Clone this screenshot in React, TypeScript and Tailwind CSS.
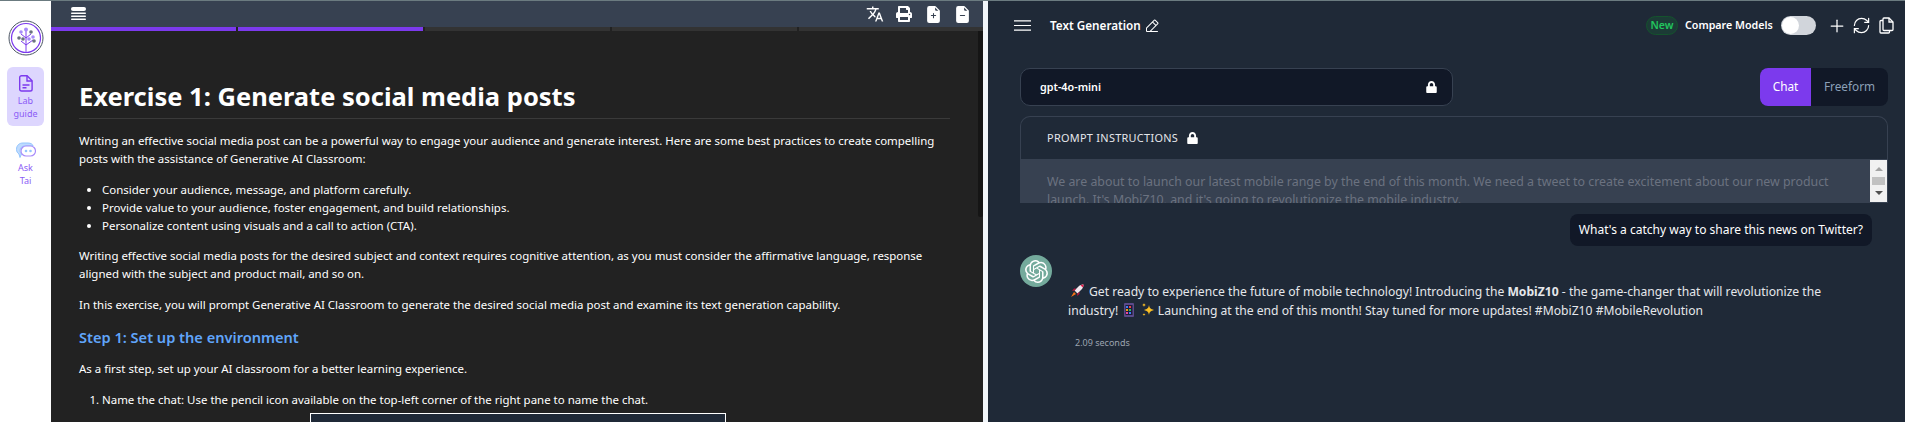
import { Plus, RefreshCw } from "lucide-react";
import { BsFileEarmarkMinusFill, BsFileEarmarkPlusFill } from "react-icons/bs";
import { FaLock, FaPrint } from "react-icons/fa";
import { MdTranslate } from "react-icons/md";
import { PiPencilSimpleLine } from "react-icons/pi";
import { SiOpenai } from "react-icons/si";

const bullets = [
  "Consider your audience, message, and platform carefully.",
  "Provide value to your audience, foster engagement, and build relationships.",
  "Personalize content using visuals and a call to action (CTA).",
];

const progress = [true, true, false, false];

const Logo = () => (
  <svg width="36" height="36" viewBox="0 0 36 36" fill="none">
    <circle cx="18" cy="18" r="17" stroke="#4b5563" strokeWidth="1" />
    <circle cx="18" cy="18" r="14.5" stroke="#7c3aed" strokeWidth="1.2" />
    <path d="M18 32V10M18 25l-5-4M18 25l7-5M18 18l-5-4M18 18l5-4" stroke="#7c3aed" strokeWidth="1" />
    <circle cx="18" cy="9.5" r="2" fill="#a78bfa" />
    <circle cx="13" cy="12" r="1.8" fill="#a78bfa" />
    <circle cx="23" cy="12" r="1.8" fill="#6b7280" />
    <circle cx="11" cy="18" r="1.8" fill="#6b7280" />
    <circle cx="25" cy="17" r="1.8" fill="#a78bfa" />
    <circle cx="15" cy="19" r="1.8" fill="#6b7280" />
    <circle cx="21" cy="19" r="1.8" fill="#a78bfa" />
    <circle cx="26" cy="21" r="1.8" fill="#6b7280" />
  </svg>
);

const LabIcon = () => (
  <svg width="14" height="17" viewBox="0 0 14 17" fill="none" stroke="#7c3aed" strokeWidth="1.4">
    <path d="M2.5.8h5.6l5 5v8.4a1.8 1.8 0 0 1-1.8 1.8H2.5A1.8 1.8 0 0 1 .7 14.200V2.600A1.800 1.800 0 0 1 2.500.800Z" />
    <path d="M8 1v5h5" />
    <path d="M3.500 10h7M3.500 12.800h4" />
  </svg>
);

const AskIcon = () => (
  <svg width="20" height="17" viewBox="0 0 20 17" fill="none">
    <path d="M7 1h5c3 0 5 1.500 5 3H8.500C6 4 4 6 4 8.500c0 1.500.5 2.500 1.500 3.500L4 15.500 3 12c-1.500-1-2.500-2.500-2.500-4.500C.5 3.500 3 1 7 1Z" fill="#bfdbfe" stroke="#93c5fd" />
    <rect x="5" y="4" width="14.500" height="10" rx="5" fill="#fff" stroke="#a78bfa" strokeWidth="1.200" />
    <circle cx="10" cy="9" r="1.300" fill="#93c5fd" />
    <circle cx="14.500" cy="9" r="1.300" fill="#93c5fd" />
  </svg>
);

const StackIcon = () => (
  <svg width="15" height="14" viewBox="0 0 15 14" fill="#fff">
    <rect x="0" y="0" width="15" height="4" rx="2" />
    <rect x="0" y="5.500" width="15" height="1.500" rx=".7" />
    <rect x="0" y="8.500" width="15" height="1.500" rx=".7" />
    <rect x="0" y="11.500" width="15" height="1.500" rx=".7" />
  </svg>
);

const BurgerIcon = () => (
  <svg width="17" height="11" viewBox="0 0 17 11" stroke="#fff" strokeWidth="1.200">
    <path d="M0 .8h17M0 5.500h17M0 10.200h17" />
  </svg>
);

const CopyIcon = () => (
  <svg width="15" height="17" viewBox="0 0 15 17" fill="none" stroke="#fff" strokeWidth="1.300">
    <path d="M5 1h5l4 4v7.500a1 1 0 0 1-1 1H5a1 1 0 0 1-1-1V2a1 1 0 0 1 1-1Z" />
    <path d="M10 1v4h4" />
    <path d="M4 3.500H2a1 1 0 0 0-1 1V15a1 1 0 0 0 1 1h7.500a1 1 0 0 0 1-1v-1.500" />
  </svg>
);

const RocketIcon = () => (
  <svg width="14" height="14" viewBox="0 0 14 14" className="inline-block align-[-2px]">
    <path d="M4.500 6.500 9 2c1.500-1.200 3.500-1.700 4.500-1.500.2 1-.3 3-1.500 4.500L7.500 9.500Z" fill="#f3e8ee" />
    <path d="M10.500 1.200c1-.6 2.300-.8 3-.7.1.7-.1 2-.7 3Z" fill="#e11d48" />
    <path d="M4.500 6.500 2 7l2-2.500h2ZM7.500 9.500 7 12l2.500-2V8Z" fill="#be123c" />
    <path d="M4 8 1 13l5-3Z" fill="#f97316" />
  </svg>
);

const AbacusIcon = () => (
  <svg width="10" height="14" viewBox="0 0 10 14" className="inline-block align-[-2px]">
    <rect x="0" y="0" width="10" height="14" rx="1" fill="#5b4b8a" />
    <rect x="1.500" y="2" width="7" height="10" fill="#1e1b3a" />
    <rect x="2" y="3" width="2" height="2" fill="#3b82f6" />
    <rect x="5" y="3" width="2" height="2" fill="#ef4444" />
    <rect x="2" y="6" width="2" height="2" fill="#f59e0b" />
    <rect x="5" y="6" width="2" height="2" fill="#22c55e" />
    <rect x="2" y="9" width="2" height="2" fill="#ec4899" />
    <rect x="5" y="9" width="2" height="2" fill="#3b82f6" />
  </svg>
);

const SparkleIcon = () => (
  <svg width="14" height="14" viewBox="0 0 14 14" fill="#fbbf24" className="inline-block align-[-2px]">
    <path d="M8 2c.5 3 1.500 4 5 5-3.500 1-4.500 2-5 5-.5-3-1.500-4-5-5 3.500-1 4.500-2 5-5Z" />
    <path d="M3 0c.2 1.200.8 1.800 2 2-1.200.2-1.800.8-2 2-.2-1.200-.8-1.800-2-2 1.200-.2 1.800-.8 2-2ZM3 10c.2 1 .6 1.400 1.500 1.500-.9.200-1.300.6-1.500 1.500-.2-.9-.6-1.300-1.500-1.500.9-.1 1.300-.5 1.500-1.500Z" />
  </svg>
);

export default function App() {
  return (
    <div className="flex flex-col h-[422px] w-[1905px] overflow-hidden font-['Noto_Sans','Open_Sans',sans-serif]">
      <div className="h-px shrink-0 bg-[#6b7b80]" />
      <div className="flex flex-1 min-h-0">
        {/* Sidebar */}
        <aside className="w-[51px] shrink-0 bg-white flex flex-col items-center pt-[19px]">
          <Logo />
          <div className="mt-[11px] w-[37px] h-[59px] rounded-md bg-[#ddd6fe] flex flex-col items-center pt-2 text-[#8b5cf6]">
            <LabIcon />
            <span className="mt-[2px] text-[9px] leading-[13px] text-center">Lab<br />guide</span>
          </div>
          <div className="mt-4 flex flex-col items-center text-[#8b5cf6]">
            <AskIcon />
            <span className="mt-[2px] text-[9px] leading-[13px] text-center">Ask<br />Tai</span>
          </div>
        </aside>

        {/* Lab guide */}
        <section className="w-[932px] shrink-0 flex flex-col bg-[#222222]">
          <div className="h-[26px] shrink-0 bg-[#374151] flex items-center justify-between pl-[20px] pr-[12px]">
            <StackIcon />
            <div className="flex items-center text-white">
              <MdTranslate className="w-[18px] h-[18px]" />
              <FaPrint className="ml-[12px] w-[16px] h-[16px]" />
              <BsFileEarmarkPlusFill className="ml-[13px] w-[17px] h-[17px]" />
              <BsFileEarmarkMinusFill className="ml-[12px] w-[17px] h-[17px]" />
            </div>
          </div>
          <div className="h-1 shrink-0 flex gap-[2px] bg-[#222222]">
            {progress.map((done, i) => (
              <div key={i} className={done ? "w-[185px] bg-[#7c3aed]" : "w-[185px] bg-[#333333]"} />
            ))}
            <div className="flex-1 bg-[#333333]" />
          </div>
          <div className="flex flex-1 min-h-0">
            <div className="flex-1 min-w-0 pl-[28px] pr-[28px] pt-[45px] text-white text-[11.46px] leading-[18px]">
              <h1 className="text-[25.5px] leading-[40px] font-bold pb-[2px] border-b border-[#3a3a3a]">Exercise 1: Generate social media posts</h1>
              <p className="mt-[13px]">Writing an effective social media post can be a powerful way to engage your audience and generate interest. Here are some best practices to create compelling posts with the assistance of Generative AI Classroom:</p>
              <ul className="mt-[13px] pl-[23px] list-disc">
                {bullets.map((item) => (
                  <li key={item}>{item}</li>
                ))}
              </ul>
              <p className="mt-[12px]">Writing effective social media posts for the desired subject and context requires cognitive attention, as you must consider the affirmative language, response aligned with the subject and product mail, and so on.</p>
              <p className="mt-[13px]">In this exercise, you will prompt Generative AI Classroom to generate the desired social media post and examine its text generation capability.</p>
              <h2 className="mt-[11px] text-[14.6px] leading-[24px] font-semibold text-[#60a5fa]">Step 1: Set up the environment</h2>
              <p className="mt-[11px]">As a first step, set up your AI classroom for a better learning experience.</p>
              <ol className="mt-[13px] pl-[23px] list-decimal">
                <li>Name the chat: Use the pencil icon available on the top-left corner of the right pane to name the chat.</li>
              </ol>
              <div className="mt-[4px] ml-[231px] w-[416px] h-[40px] border border-white bg-[#1f2937]" />
            </div>
            <div className="w-[5px] shrink-0 h-[186px] rounded-b-sm bg-[#151515]" />
          </div>
        </section>

        <div className="w-[5px] shrink-0 bg-[#f1f5f9]" />

        {/* Chat pane */}
        <section className="flex-1 min-w-0 bg-[#1f2937] text-white flex flex-col">
          <header className="flex items-center h-[49px] shrink-0 pl-[26px] pr-[11px]">
            <BurgerIcon />
            <span className="ml-[19px] text-[11.7px] font-semibold">Text Generation</span>
            <PiPencilSimpleLine className="ml-[3px] w-[16px] h-[16px]" />
            <span className="ml-auto h-[19px] w-[32px] rounded-full border border-[#14532d] bg-[#1c3b36] text-[#22c55e] text-[10.5px] font-semibold leading-[17px] text-center">New</span>
            <span className="ml-[7px] w-[86px] text-[10.7px] font-semibold whitespace-nowrap">Compare Models</span>
            <span className="ml-[10px] w-[35px] h-[19px] rounded-full bg-[#d1d5db] flex items-center pl-[1px]">
              <span className="w-[17px] h-[17px] rounded-full bg-white" />
            </span>
            <Plus className="ml-[11px] w-[20px] h-[20px]" strokeWidth={1.5} />
            <RefreshCw className="ml-[5px] w-[19px] h-[19px]" strokeWidth={1.5} />
            <span className="ml-[8px]"><CopyIcon /></span>
          </header>

          <div className="pl-[32px] pr-[17px] mt-[18px]">
            <div className="flex items-start justify-between">
              <div className="w-[433px] h-[38px] rounded-[10px] border border-[#374151] bg-[#111827] flex items-center justify-between pl-[19px] pr-[15px]">
                <span className="text-[10.8px] font-semibold">gpt-4o-mini</span>
                <FaLock className="w-[11px] h-[12px]" />
              </div>
              <div className="flex h-[38px] w-[128px] rounded-lg overflow-hidden bg-[#111827] text-[11.8px]">
                <span className="w-[51px] bg-[#7c3aed] flex items-center justify-center">Chat</span>
                <span className="flex-1 flex items-center justify-center text-[#8ca0b8]">Freeform</span>
              </div>
            </div>

            <div className="mt-[10px] h-[87px] rounded-t-[10px] border-x border-t border-[#374151] overflow-hidden">
              <div className="h-[42px] flex items-center pl-[26px] text-[10.9px] tracking-[0.3px] text-[#e5e7eb]">
                PROMPT INSTRUCTIONS
                <FaLock className="ml-[9px] w-[11px] h-[12px] text-white" />
              </div>
              <div className="relative h-[44px] bg-[#374151] pl-[26px] pr-[48px] pt-[14px] text-[12.36px] leading-[18px] text-[#6b7280] overflow-hidden">
                We are about to launch our latest mobile range by the end of this month. We need a tweet to create excitement about our new product launch. It's MobiZ10, and it's going to revolutionize the mobile industry.
                <div className="absolute right-0 top-[1px] w-[17px] h-[42px] bg-[#f1f1f1] flex flex-col items-center justify-between py-[7px]">
                  <span className="w-0 h-0 border-x-[4px] border-x-transparent border-b-[4px] border-b-[#a3a3a3]" />
                  <span className="w-[13px] h-[8px] bg-[#c1c1c1]" />
                  <span className="w-0 h-0 border-x-[4px] border-x-transparent border-t-[4px] border-t-[#505050]" />
                </div>
              </div>
            </div>
          </div>

          <div className="flex justify-end pr-[33px] mt-[11px]">
            <div className="h-[32px] rounded-lg bg-[#111827] px-[9px] flex items-center text-[12.05px]">What's a catchy way to share this news on Twitter?</div>
          </div>

          <div className="flex pl-[32px] pr-[70px] mt-[9px]">
            <div className="w-[32px] h-[32px] shrink-0 rounded-full bg-[#74aa9c] flex items-center justify-center">
              <SiOpenai className="w-[23px] h-[23px]" />
            </div>
            <div className="ml-[16px] mt-[27px]">
              <p className="text-[12.15px] leading-[19px] text-[#e5e7eb]">
                <span className="ml-[2px] mr-[5px]"><RocketIcon /></span>Get ready to experience the future of mobile technology! Introducing the <strong className="font-bold">MobiZ10</strong> - the game-changer that will revolutionize the industry! <span className="mx-[3px]"><AbacusIcon /></span> <SparkleIcon /> Launching at the end of this month! Stay tuned for more updates! #MobiZ10 #MobileRevolution
              </p>
              <p className="ml-[7px] mt-[16px] text-[9px] leading-[14px] text-[#9ca3af]">2.09 seconds</p>
            </div>
          </div>
        </section>
      </div>
    </div>
  );
}
